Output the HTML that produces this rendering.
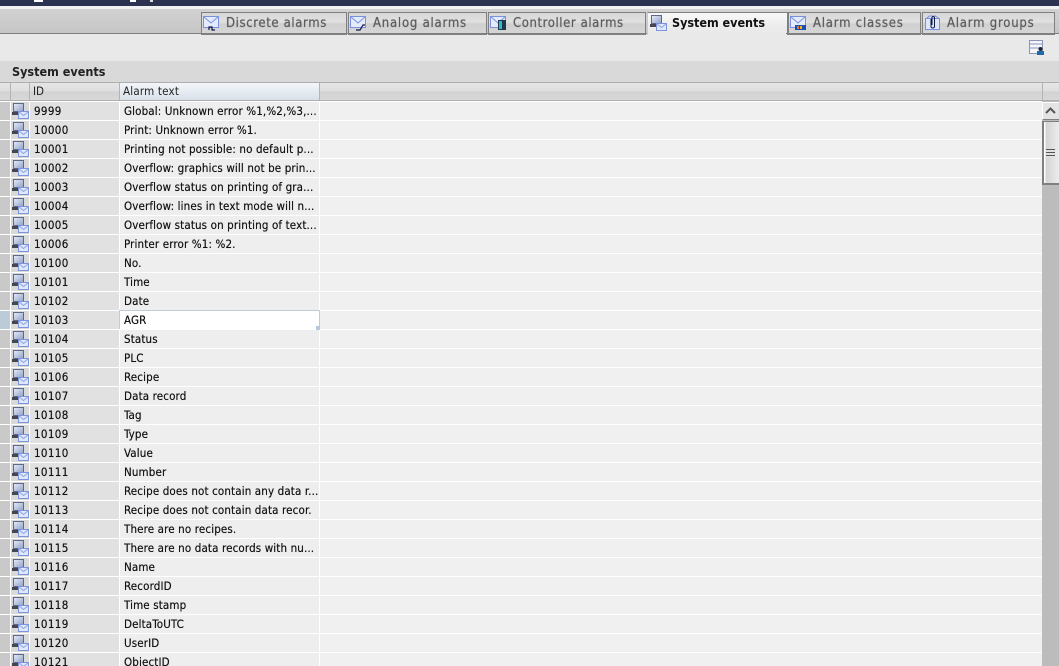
<!DOCTYPE html>
<html><head><meta charset="utf-8"><style>
html,body{margin:0;padding:0;width:1059px;height:666px;overflow:hidden;background:#e9e9e9}
body{position:relative;font-family:"DejaVu Sans Condensed","DejaVu Sans","Liberation Sans",sans-serif;font-stretch:condensed;font-size:11px;color:#111}
div,svg{position:absolute}
.tab{top:12px;height:20px;border:1px solid #808080;border-bottom:2px solid #808080;background:linear-gradient(#d8d8d8,#e0e0e0 45%,#d0d0d0 55%,#d6d6d6);font-size:13px;color:#5c5c5c;line-height:20px;letter-spacing:.62px;white-space:nowrap;text-shadow:0 0 .7px #666}
.tab span{position:absolute;top:1px}
.tab svg{left:1px;top:2px}
.r{left:0;width:1042px;height:19px;background:linear-gradient(#fff,#fff) 0 0/100% 1px no-repeat,linear-gradient(#c9c9c9,#c9c9c9) 0 0/10px 100% no-repeat,linear-gradient(#d9d9d9,#d9d9d9) 11px 0/18px 100% no-repeat,linear-gradient(#e1e1e1,#e1e1e1) 30px 0/89px 100% no-repeat,linear-gradient(#eee,#eee) 120px 0/199px 100% no-repeat,linear-gradient(#f0f0f0,#f0f0f0) 320px 0/100% 100% no-repeat,#fff}
.i{left:34px;top:1px;line-height:18px;font-size:11.5px;letter-spacing:.35px;text-shadow:0 0 .4px #333}
.t{left:124px;top:1px;width:194px;line-height:18px;font-size:11.5px;letter-spacing:.13px;white-space:nowrap;overflow:hidden;text-shadow:0 0 .4px #333}
.r svg{left:12px;top:2px}
</style></head><body>
<svg width="0" height="0" style="left:0;top:0"><defs>
<linearGradient id="mon" x1="0" y1="0" x2="1" y2="1"><stop offset="0" stop-color="#e8edf8"/><stop offset="1" stop-color="#8ea0c8"/></linearGradient>
<symbol id="ev" viewBox="0 0 17 16"><rect x="1.5" y=".5" width="10" height="8" fill="url(#mon)" stroke="#5c6a88"/><rect x="0" y="9" width="10" height="3" fill="#44474f"/><rect x="6.5" y="8.500" width="10" height="7" fill="#dfe7fc" stroke="#7d93dc"/><path d="M7 9l4.500 3.500L16 9" fill="none" stroke="#8ea2e2"/></symbol>
<symbol id="env" viewBox="0 0 17 16"><rect x=".5" y="1.500" width="15" height="11" fill="#e4ebfc" stroke="#7a90e0"/><path d="M1 2l7 6 7-6" fill="none" stroke="#7a90e0"/></symbol>
</defs></svg>

<div style="left:0;top:0;width:1059px;height:6px;background:#2b3350"></div>
<div style="left:34px;top:0;width:9px;height:2px;background:#fff"></div>
<div style="left:130px;top:0;width:6px;height:2px;background:#fff"></div>
<div style="left:150px;top:0;width:3px;height:2px;background:#ddd"></div>
<div style="left:0;top:6px;width:1059px;height:3px;background:#f2f2f2"></div>
<div style="left:0;top:9px;width:1059px;height:24px;background:linear-gradient(#d2d2d2,#c6c6c6)"></div>
<div style="left:0;top:33px;width:1059px;height:1px;background:#808080"></div>

<div class="tab" style="left:201px;width:144px"><svg width="17" height="16"><use href="#env"/><path d="M6 15v-3h3v3h3" fill="none" stroke="#101840" stroke-width="1.200"/></svg><span style="left:24px">Discrete alarms</span></div>
<div class="tab" style="left:348px;width:137px"><svg width="17" height="16"><use href="#env"/><path d="M6 15h4l3-5h2" fill="none" stroke="#101840" stroke-width="1.200"/></svg><span style="left:24px;letter-spacing:.78px">Analog alarms</span></div>
<div class="tab" style="left:488px;width:156px"><svg width="17" height="16"><use href="#env"/><rect x="8" y="5" width="8" height="10" fill="#1e3a48"/><rect x="9" y="6" width="3" height="8" fill="#35b7c8"/></svg><span style="left:24px;letter-spacing:.58px">Controller alarms</span></div>
<div style="left:647px;top:12px;width:139px;height:22px;border:1px solid #808080;border-bottom:none;border-left-color:#ccc;background:linear-gradient(#f8f8f8,#ececec 60%,#e9e9e9);font-size:12.500px;font-weight:bold;color:#111;line-height:20px;white-space:nowrap"><svg width="17" height="16" style="left:2px;top:2px"><use href="#ev"/></svg><span style="position:absolute;left:24px;top:0;letter-spacing:-.03px">System events</span></div>
<div style="left:786px;top:33px;width:2px;height:1px;background:#808080"></div>
<div class="tab" style="left:788px;width:131px"><svg width="17" height="16"><use href="#env"/><rect x="5" y="10" width="11" height="5" fill="#1d4fa8"/><rect x="7" y="11" width="2" height="3" fill="#e8792c"/><rect x="10" y="11" width="2" height="3" fill="#e8b22c"/></svg><span style="left:24px;letter-spacing:.78px">Alarm classes</span></div>
<div class="tab" style="left:922px;width:131px"><svg width="17" height="16"><rect x="1.500" y="3.500" width="14" height="11" fill="#dce5fa" stroke="#7a90e0"/><path d="M1.500 4l4-3h6l4 3" fill="none" stroke="#7a90e0"/><path d="M7 4v8a2 2 0 0 0 3.500 0V2.500a1.300 1.300 0 0 0-2.500 0V10" fill="none" stroke="#101840"/></svg><span style="left:24px;letter-spacing:.78px">Alarm groups</span></div>

<svg width="16" height="16" style="left:1029px;top:40px"><rect x=".5" y=".5" width="13" height="13" fill="#f4f6fb" stroke="#8a96b8"/><path d="M1 4h12M1 8h12" stroke="#8a96b8"/><circle cx="11.500" cy="9" r="2" fill="#222"/><rect x="8" y="11" width="7" height="4" fill="#1f6aa8"/></svg>

<div style="left:0;top:61px;width:1059px;height:21px;background:#d9d9d9"></div>
<div style="left:12px;top:63px;font-weight:bold;font-size:12.500px;line-height:17px;color:#222">System events</div>

<div style="left:0;top:82px;width:1059px;height:1px;background:#aeaeae"></div>
<div style="left:0;top:83px;width:1059px;height:17px;background:linear-gradient(#e6e6e6,#dedede 45%,#d2d2d2 55%,#d8d8d8)"></div>
<div style="left:120px;top:83px;width:199px;height:17px;background:linear-gradient(#f3f6f9,#e6ecf2 50%,#d8e0e8)"></div>
<div style="left:0;top:100px;width:1059px;height:1px;background:#aeaeae"></div>
<div style="left:10px;top:83px;width:1px;height:17px;background:#b4b4b4"></div>
<div style="left:29px;top:83px;width:1px;height:17px;background:#b4b4b4"></div>
<div style="left:119px;top:83px;width:1px;height:17px;background:#b4b4b4"></div>
<div style="left:319px;top:83px;width:1px;height:17px;background:#b4b4b4"></div>
<div style="left:1042px;top:83px;width:1px;height:17px;background:#b4b4b4"></div>
<div style="left:33px;top:84px;line-height:15px;color:#222;font-size:11.500px">ID</div>
<div style="left:123px;top:84px;line-height:15px;letter-spacing:.2px;color:#222;font-size:11.500px">Alarm text</div>

<div class="r" style="top:101px"><svg width="17" height="16"><use href="#ev"/></svg><div class="i">9999</div><div class="t">Global: Unknown error %1,%2,%3,...</div></div>
<div class="r" style="top:120px"><svg width="17" height="16"><use href="#ev"/></svg><div class="i">10000</div><div class="t">Print: Unknown error %1.</div></div>
<div class="r" style="top:139px"><svg width="17" height="16"><use href="#ev"/></svg><div class="i">10001</div><div class="t">Printing not possible: no default p...</div></div>
<div class="r" style="top:158px"><svg width="17" height="16"><use href="#ev"/></svg><div class="i">10002</div><div class="t">Overflow: graphics will not be prin...</div></div>
<div class="r" style="top:177px"><svg width="17" height="16"><use href="#ev"/></svg><div class="i">10003</div><div class="t">Overflow status on printing of gra...</div></div>
<div class="r" style="top:196px"><svg width="17" height="16"><use href="#ev"/></svg><div class="i">10004</div><div class="t">Overflow: lines in text mode will n...</div></div>
<div class="r" style="top:215px"><svg width="17" height="16"><use href="#ev"/></svg><div class="i">10005</div><div class="t">Overflow status on printing of text...</div></div>
<div class="r" style="top:234px"><svg width="17" height="16"><use href="#ev"/></svg><div class="i">10006</div><div class="t">Printer error %1: %2.</div></div>
<div class="r" style="top:253px"><svg width="17" height="16"><use href="#ev"/></svg><div class="i">10100</div><div class="t">No.</div></div>
<div class="r" style="top:272px"><svg width="17" height="16"><use href="#ev"/></svg><div class="i">10101</div><div class="t">Time</div></div>
<div class="r" style="top:291px"><svg width="17" height="16"><use href="#ev"/></svg><div class="i">10102</div><div class="t">Date</div></div>
<div class="r" style="top:310px"><div style="left:0;top:1px;width:10px;height:18px;background:#bccbd8"></div><div style="left:119px;top:0;width:199px;height:18px;background:#fff;border:1px solid #c0ccd8"></div><svg width="17" height="16"><use href="#ev"/></svg><div class="i">10103</div><div class="t">AGR</div></div>
<div class="r" style="top:329px"><svg width="17" height="16"><use href="#ev"/></svg><div class="i">10104</div><div class="t">Status</div></div>
<div class="r" style="top:348px"><svg width="17" height="16"><use href="#ev"/></svg><div class="i">10105</div><div class="t">PLC</div></div>
<div class="r" style="top:367px"><svg width="17" height="16"><use href="#ev"/></svg><div class="i">10106</div><div class="t">Recipe</div></div>
<div class="r" style="top:386px"><svg width="17" height="16"><use href="#ev"/></svg><div class="i">10107</div><div class="t">Data record</div></div>
<div class="r" style="top:405px"><svg width="17" height="16"><use href="#ev"/></svg><div class="i">10108</div><div class="t">Tag</div></div>
<div class="r" style="top:424px"><svg width="17" height="16"><use href="#ev"/></svg><div class="i">10109</div><div class="t">Type</div></div>
<div class="r" style="top:443px"><svg width="17" height="16"><use href="#ev"/></svg><div class="i">10110</div><div class="t">Value</div></div>
<div class="r" style="top:462px"><svg width="17" height="16"><use href="#ev"/></svg><div class="i">10111</div><div class="t">Number</div></div>
<div class="r" style="top:481px"><svg width="17" height="16"><use href="#ev"/></svg><div class="i">10112</div><div class="t">Recipe does not contain any data r...</div></div>
<div class="r" style="top:500px"><svg width="17" height="16"><use href="#ev"/></svg><div class="i">10113</div><div class="t">Recipe does not contain data recor.</div></div>
<div class="r" style="top:519px"><svg width="17" height="16"><use href="#ev"/></svg><div class="i">10114</div><div class="t">There are no recipes.</div></div>
<div class="r" style="top:538px"><svg width="17" height="16"><use href="#ev"/></svg><div class="i">10115</div><div class="t">There are no data records with nu...</div></div>
<div class="r" style="top:557px"><svg width="17" height="16"><use href="#ev"/></svg><div class="i">10116</div><div class="t">Name</div></div>
<div class="r" style="top:576px"><svg width="17" height="16"><use href="#ev"/></svg><div class="i">10117</div><div class="t">RecordID</div></div>
<div class="r" style="top:595px"><svg width="17" height="16"><use href="#ev"/></svg><div class="i">10118</div><div class="t">Time stamp</div></div>
<div class="r" style="top:614px"><svg width="17" height="16"><use href="#ev"/></svg><div class="i">10119</div><div class="t">DeltaToUTC</div></div>
<div class="r" style="top:633px"><svg width="17" height="16"><use href="#ev"/></svg><div class="i">10120</div><div class="t">UserID</div></div>
<div class="r" style="top:652px;height:14px;overflow:hidden"><svg width="17" height="16"><use href="#ev"/></svg><div class="i">10121</div><div class="t">ObjectID</div></div>
<div style="left:316px;top:326px;width:4px;height:4px;background:#b8c8d8"></div>

<div style="left:1042px;top:101px;width:17px;height:565px;background:#bcbcbc"></div>
<div style="left:1042px;top:102px;width:17px;height:18px;background:#e4e4e4;border-top:1px solid #fff;border-left:1px solid #fff;box-sizing:border-box;border-bottom:1px solid #808080"></div>
<svg width="11" height="7" style="left:1045px;top:107px"><path d="M1 6l4.500-4.500L10 6" fill="none" stroke="#555" stroke-width="2"/></svg>
<div style="left:1042px;top:121px;width:17px;height:64px;box-sizing:border-box;border-left:2px solid #808080;border-bottom:2px solid #808080;border-top:1px solid #808080;background:linear-gradient(90deg,#fff 0,#fff 1px,#d4d4d4 2px,#ececec 100%)"></div>
<div style="left:1046px;top:149px;width:9px;height:9px;background:repeating-linear-gradient(#555 0,#555 1px,#e0e0e0 1px,#e0e0e0 3px)"></div>
</body></html>
